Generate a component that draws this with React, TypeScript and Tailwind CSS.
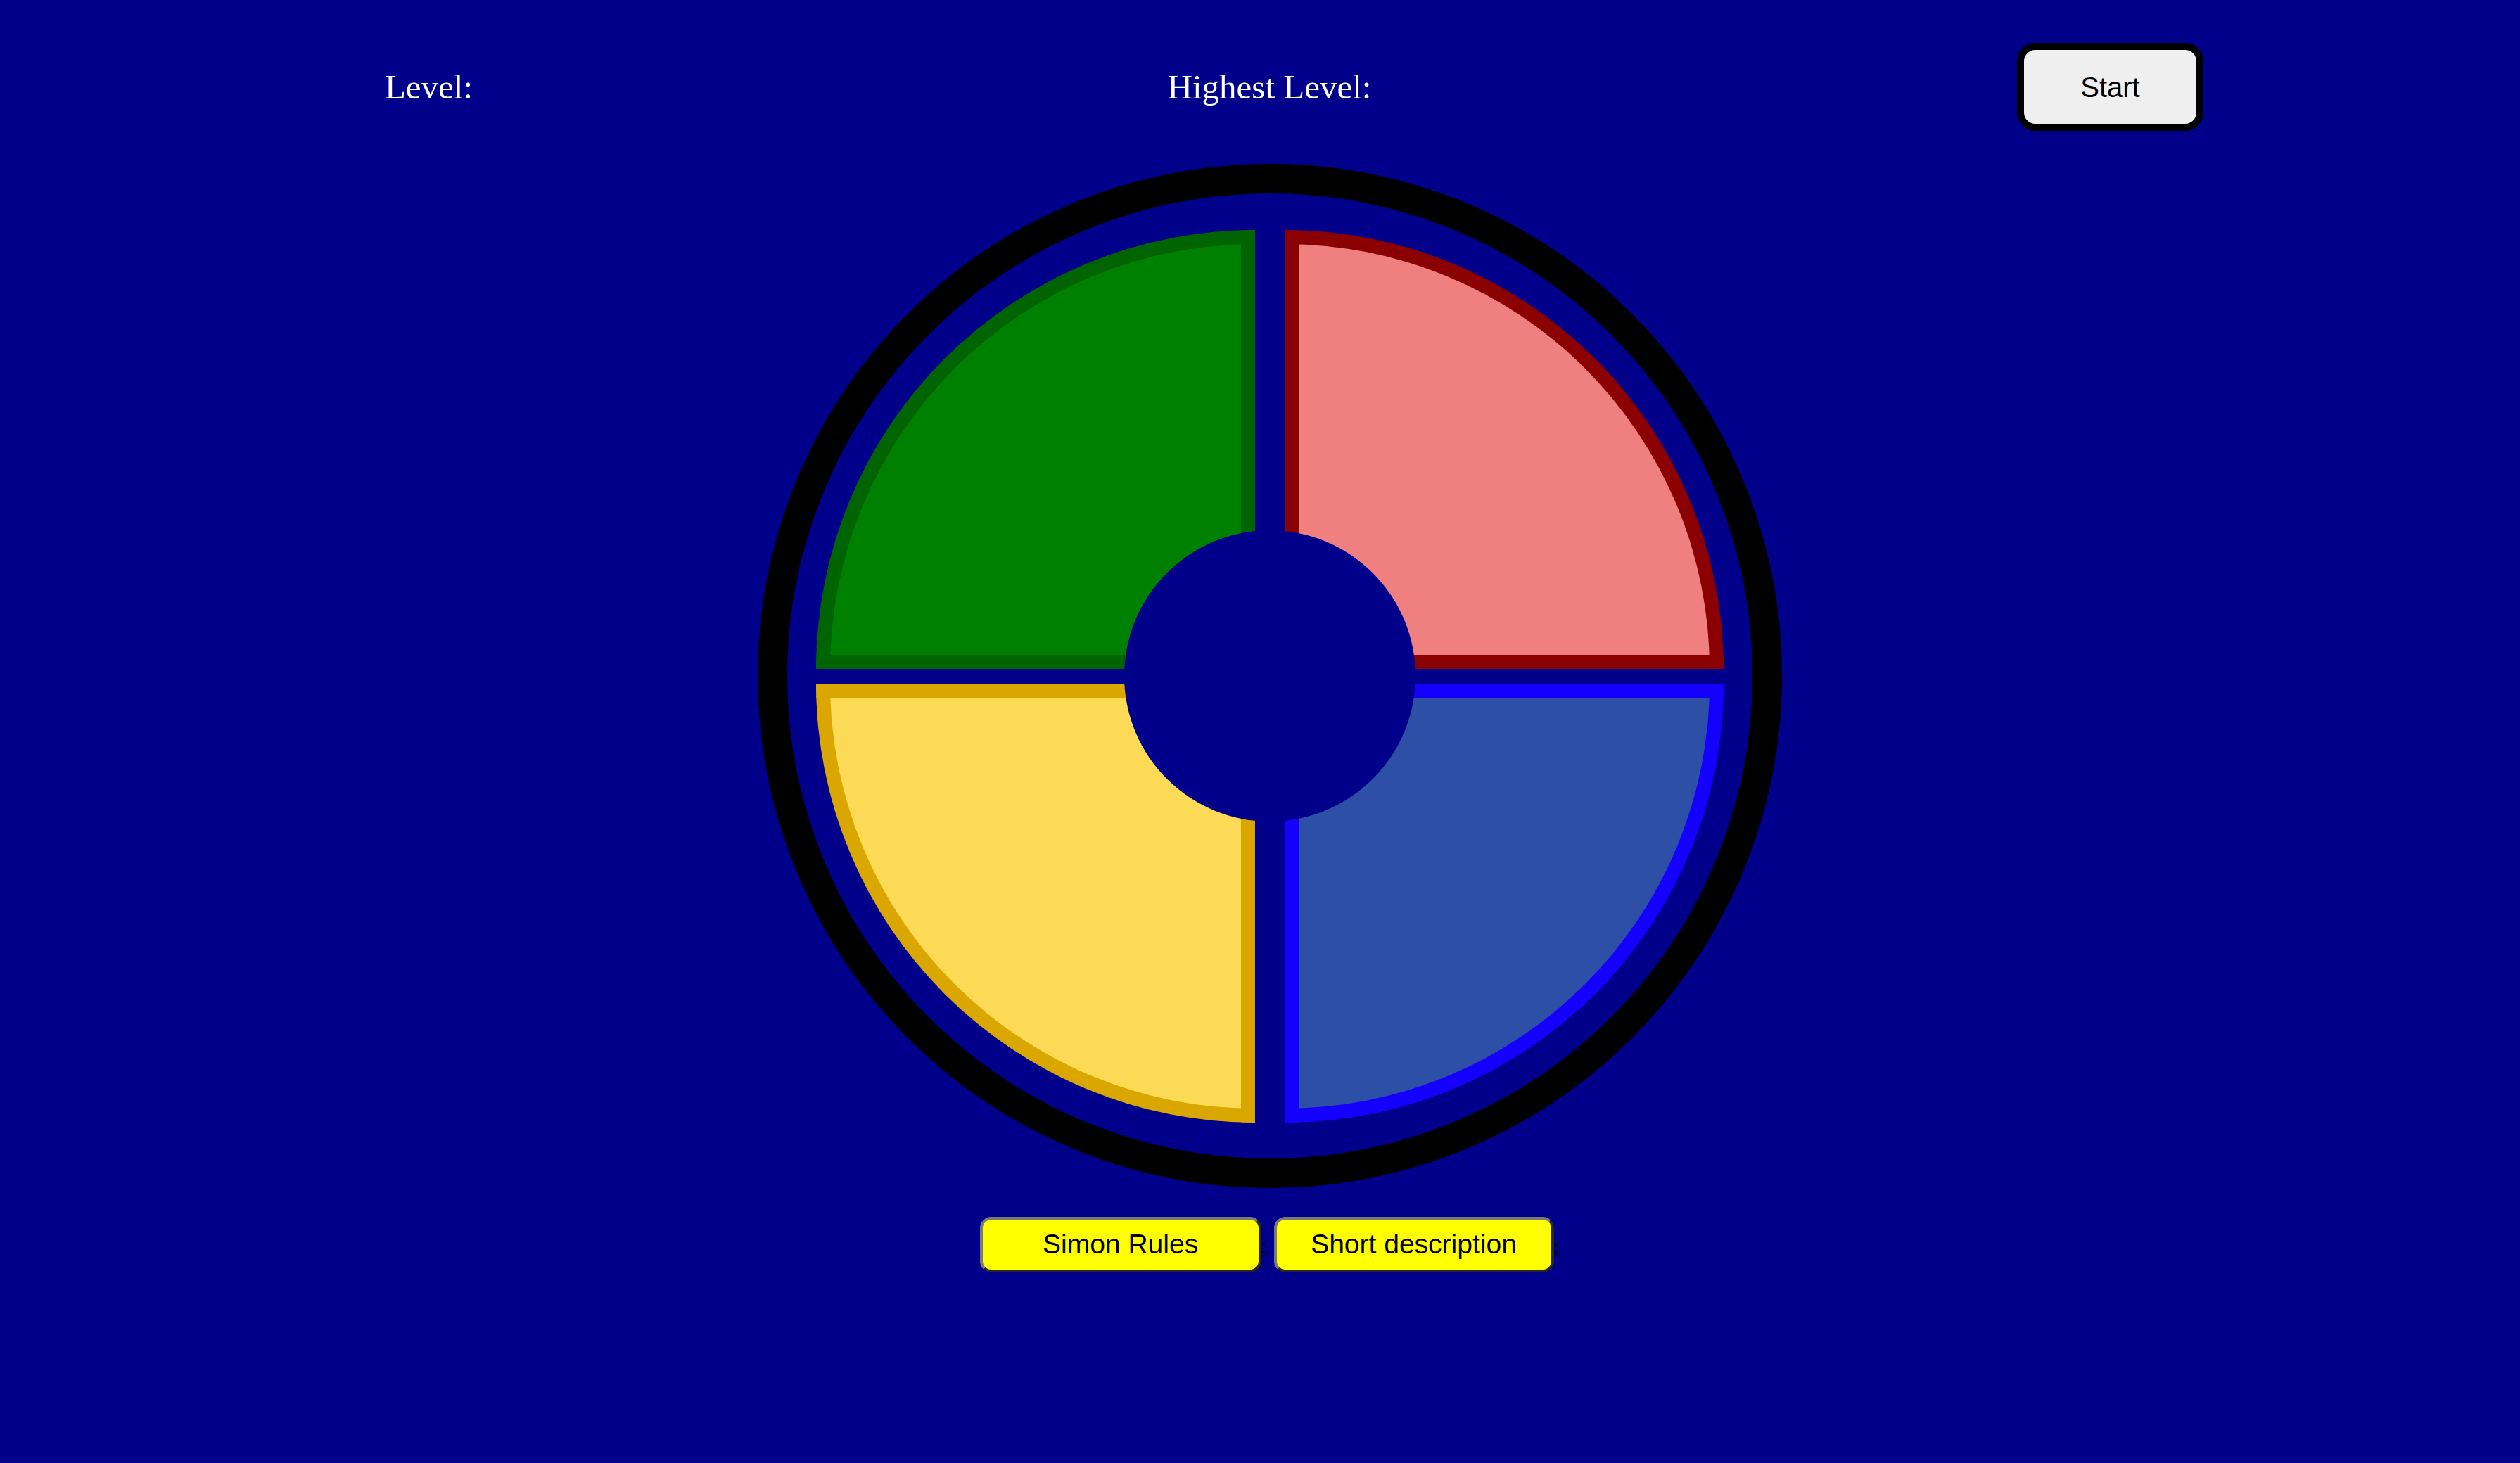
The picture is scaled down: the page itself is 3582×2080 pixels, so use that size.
import React from "react";

const serif = { fontFamily: '"Liberation Serif", "Times New Roman", serif' };
const sans = { fontFamily: '"Liberation Sans", Arial, sans-serif' };

export default function App() {
  return (
    <div className="w-full h-[2080px] bg-[#00008B] overflow-hidden" style={serif}>
      {/* header */}
      <div className="ml-[12px] pt-[61px] grid grid-cols-[1195px_1195px_1195px] items-center">
        <div className="flex justify-center text-white text-[49px]" style={serif}>
          Level:
        </div>
        <div className="flex justify-center text-white text-[49px]" style={serif}>
          Highest Level:
        </div>
        <div className="flex justify-center">
          <button
            className="w-[265px] h-[125px] border-[10px] border-black rounded-[26px] bg-[#EFEFEF] text-black text-[40px] flex items-center justify-center"
            style={sans}
          >
            Start
          </button>
        </div>
      </div>

      {/* board */}
      <div className="pl-[28px] mt-[47px] flex justify-center">
        <div className="relative w-[1456px] h-[1456px] rounded-full border-[42px] border-black flex items-center justify-center">
          <div className="grid grid-cols-[624px_624px] grid-rows-[624px_624px] gap-x-[42px] gap-y-[21px]">
            <div className="bg-[#008000] border-[20px] border-[#006400] rounded-tl-[624px]" />
            <div className="bg-[#F08080] border-[20px] border-[#8B0000] rounded-tr-[624px]" />
            <div className="bg-[#FCDA56] border-[20px] border-[#D9A700] rounded-bl-[624px]" />
            <div className="bg-[#2E4FA6] border-[20px] border-[#1400FF] rounded-br-[624px]" />
          </div>
          <div className="absolute left-1/2 top-1/2 -translate-x-1/2 -translate-y-1/2 w-[414px] h-[414px] rounded-full bg-[#00008B]" />
        </div>
      </div>

      {/* bottom buttons */}
      <div className="pl-[28px] mt-[41px] flex justify-center items-baseline text-[32px] text-black" style={serif}>
        <button
          className="w-[400px] h-[79px] bg-[#FFFF00] border-[4px] border-t-[#7A7A7A] border-l-[#7A7A7A] border-b-[#262626] border-r-[#262626] rounded-[16px] text-black text-[39px] inline-flex items-center justify-center"
          style={sans}
        >
          Simon Rules
        </button>
        <span className="mr-[9px]">;</span>
        <button
          className="w-[398px] h-[79px] bg-[#FFFF00] border-[4px] border-t-[#7A7A7A] border-l-[#7A7A7A] border-b-[#262626] border-r-[#262626] rounded-[16px] text-black text-[39px] inline-flex items-center justify-center"
          style={sans}
        >
          Short description
        </button>
        <span>;</span>
      </div>
    </div>
  );
}
